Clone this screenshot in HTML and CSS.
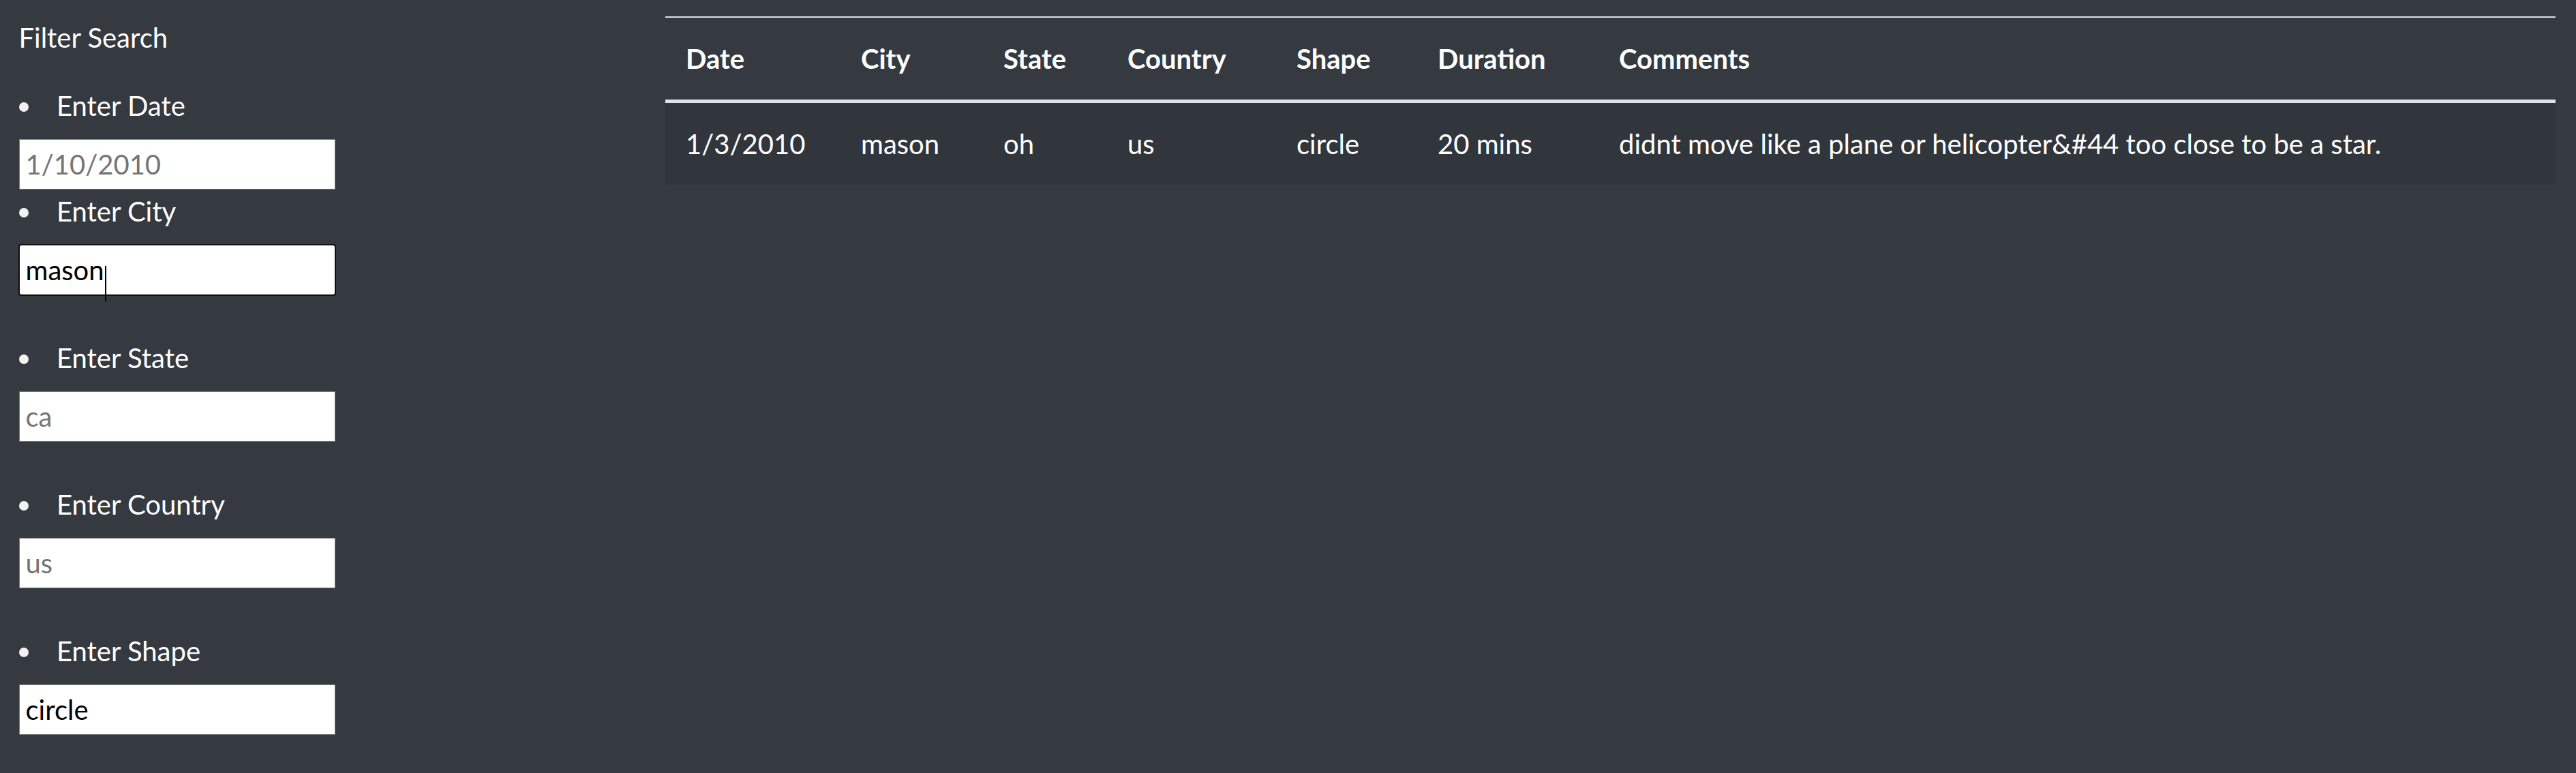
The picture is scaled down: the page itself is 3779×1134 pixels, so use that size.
FILE: index.html
```html
<!DOCTYPE html>
<html lang="en">
<head>
<meta charset="utf-8">
<title>UFO Sightings</title>
<link rel="stylesheet" href="styles.css">
</head>
<body>
<div class="layout">
  <aside class="sidebar">
    <div class="filter-title">Filter Search</div>
    <ul class="filter-list">
      <li class="filter-item filter-item--tight">
        <label class="filter-label" for="datetime">Enter Date</label>
        <input class="filter-input" id="datetime" type="text" placeholder="1/10/2010">
      </li>
      <li class="filter-item">
        <label class="filter-label" for="city">Enter City</label>
        <div class="input-wrap">
          <input class="filter-input filter-input--focused" id="city" type="text" placeholder="benton" value="mason">
          <span class="caret"></span>
        </div>
      </li>
      <li class="filter-item">
        <label class="filter-label" for="state">Enter State</label>
        <input class="filter-input" id="state" type="text" placeholder="ca">
      </li>
      <li class="filter-item">
        <label class="filter-label" for="country">Enter Country</label>
        <input class="filter-input" id="country" type="text" placeholder="us">
      </li>
      <li class="filter-item">
        <label class="filter-label" for="shape">Enter Shape</label>
        <input class="filter-input" id="shape" type="text" placeholder="circle" value="circle">
      </li>
    </ul>
  </aside>
  <main class="content">
    <table class="ufo-table">
      <thead>
        <tr>
          <th class="col-date">Date</th>
          <th class="col-city">City</th>
          <th class="col-state">State</th>
          <th class="col-country">Country</th>
          <th class="col-shape">Shape</th>
          <th class="col-duration">Duration</th>
          <th class="col-comments">Comments</th>
        </tr>
      </thead>
      <tbody>
        <tr class="row-odd">
          <td>1/3/2010</td>
          <td>mason</td>
          <td>oh</td>
          <td>us</td>
          <td>circle</td>
          <td>20 mins</td>
          <td>didnt move like a plane or helicopter&amp;#44 too close to be a star.</td>
        </tr>
      </tbody>
    </table>
  </main>
</div>
</body>
</html>
```

FILE: styles.css
```css
html, body {
  margin: 0;
  padding: 0;
}

body {
  background: #343a40;
  color: #ffffff;
  font-family: Lato, "Open Sans", "Liberation Sans", sans-serif;
  font-size: 40px;
  line-height: 60px;
  min-height: 100vh;
}

.layout {
  display: flex;
  align-items: flex-start;
}

.sidebar {
  flex: 0 0 976px;
  box-sizing: border-box;
  padding: 24.5px 0 0 27.5px;
}

.filter-title {
  height: 60px;
}

.filter-list {
  list-style: none;
  margin: 40px 0 0 0;
  padding: 0;
}

.filter-item {
  margin-bottom: 61.5px;
}

.filter-item--tight {
  margin-bottom: 1.5px;
}

.filter-label {
  display: flex;
  align-items: center;
  height: 60px;
}

.filter-label::before {
  content: "";
  width: 14px;
  height: 14px;
  border-radius: 50%;
  background: #f2f2f2;
  margin-right: 41.5px;
  margin-top: 4px;
  flex: 0 0 auto;
}

.input-wrap {
  position: relative;
  width: 464px;
}

.filter-input {
  display: block;
  box-sizing: border-box;
  width: 464px;
  height: 74px;
  margin: 19.5px 0 0 0;
  padding: 0 9px;
  border: 1px solid #767676;
  border-radius: 0;
  background: #ffffff;
  color: #000000;
  font-family: Lato, "Open Sans", "Liberation Sans", sans-serif;
  font-size: 40px;
}

.filter-input::placeholder {
  color: #757575;
  opacity: 1;
}

.filter-input--focused {
  outline: 2px solid #101010;
  outline-offset: -1px;
  border-radius: 3px;
}

.caret {
  position: absolute;
  left: 126px;
  top: 30.5px;
  width: 2px;
  height: 52px;
  background: #000000;
}

.content {
  flex: 1 1 auto;
  box-sizing: border-box;
  padding: 24px 30px 0 0;
}

.ufo-table {
  width: 100%;
  table-layout: fixed;
  border-collapse: collapse;
  color: #ffffff;
}

.ufo-table th,
.ufo-table td {
  padding: 30px;
  text-align: left;
  vertical-align: top;
  line-height: 60px;
  white-space: nowrap;
}

.ufo-table th {
  font-weight: 700;
  border-top: 2px solid #dee2e6;
  border-bottom: 5px solid #dee2e6;
}

.row-odd {
  background: #31363c;
}

.col-date { width: 197px; }
.col-city { width: 149px; }
.col-state { width: 122px; }
.col-country { width: 188px; }
.col-shape { width: 147px; }
.col-duration { width: 206px; }
```
